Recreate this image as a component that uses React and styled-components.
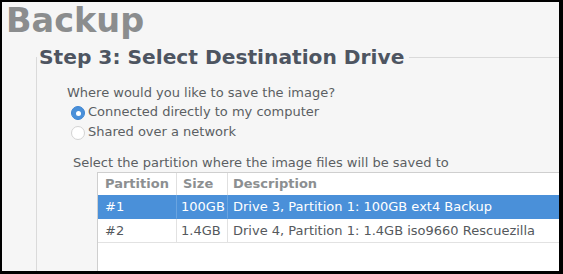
import React from "react";
import styled, { createGlobalStyle } from "styled-components";

const Global = createGlobalStyle`
  html, body { margin: 0; padding: 0; background: #000; }
  body { width: 563px; height: 274px; overflow: hidden; font-family: "DejaVu Sans", "Liberation Sans", sans-serif; }
  #root { width: 563px; height: 274px; }
`;

const Frame = styled.div`
  width: 563px;
  height: 274px;
  padding: 2px 4px 3px 2px;
  box-sizing: border-box;
  background: #000;
`;

const Window = styled.div`
  width: 100%;
  height: 100%;
  background: #f6f6f6;
  overflow: hidden;
  display: flex;
  flex-direction: column;
`;

const PageTitle = styled.h1`
  margin: 0;
  padding-left: 4px;
  font-size: 33.5px;
  line-height: 38px;
  font-weight: bold;
  color: #8b8d8e;
`;

const Section = styled.fieldset`
  margin: 5px 0 0 34px;
  padding: 0;
  border: none;
  border-top: 1px solid #dadada;
  border-left: 1px solid #dadada;
  min-width: 0;
  flex: 1;
`;

const Legend = styled.legend`
  padding: 0 5px 0 2px;
  margin: 0;
  font-size: 20.2px;
  line-height: 24px;
  font-weight: bold;
  color: #4e5561;
`;

const Body = styled.div`
  padding: 15px 0 0 30px;
  display: flex;
  flex-direction: column;
`;

const Label = styled.div`
  font-size: 13px;
  line-height: 18px;
  color: #5b5f63;
  margin-left: ${(p) => p.$indent || 0}px;
  white-space: nowrap;
`;

const RadioGroup = styled.div`
  display: flex;
  flex-direction: column;
  margin-left: 4px;
  margin-bottom: 12px;
`;

const RadioRow = styled.label`
  display: flex;
  align-items: flex-start;
  gap: 3px;
  height: 20px;
  font-size: 13px;
  line-height: 20px;
  color: #5b5f63;
  white-space: nowrap;
`;

const RadioDot = styled.span`
  width: 14px;
  height: 14px;
  margin-top: 4px;
  border-radius: 50%;
  box-sizing: border-box;
  flex: none;
  display: flex;
  align-items: center;
  justify-content: center;
  background: ${(p) => (p.$checked ? "#4a90d9" : "#ffffff")};
  border: 1px solid ${(p) => (p.$checked ? "#3d85d3" : "#d3d3d3")};
  &::after {
    content: "";
    width: 5px;
    height: 5px;
    border-radius: 50%;
    background: #fff;
    display: ${(p) => (p.$checked ? "block" : "none")};
  }
`;

const Table = styled.div`
  margin-left: 30px;
  height: 140px;
  background: #fff;
  border-left: 1px solid #cfcfcf;
  border-top: 1px solid #cfcfcf;
  display: grid;
  grid-template-columns: 79px 51px 1fr;
  grid-auto-rows: min-content;
  font-size: 13px;
  white-space: nowrap;
`;

const HeadCell = styled.div`
  height: 22px;
  line-height: 22px;
  font-weight: bold;
  color: #8c8f91;
  padding-left: ${(p) => p.$pad}px;
  border-right: ${(p) => (p.$last ? "none" : "1px solid #e0e0e0")};
`;

const Cell = styled.div`
  height: 23px;
  line-height: 23px;
  padding-left: ${(p) => p.$pad}px;
  color: ${(p) => (p.$selected ? "#ffffff" : "#55595d")};
  background: ${(p) => (p.$selected ? "#4a90d9" : "#ffffff")};
  border-bottom: 1px solid ${(p) => (p.$selected ? "#4a90d9" : "#e2e2e2")};
  border-right: ${(p) =>
    p.$last ? "none" : `1px solid ${p.$selected ? "#6aa4e0" : "#e2e2e2"}`};
`;

const columns = [
  { title: "Partition", headPad: 7, pad: 7 },
  { title: "Size", headPad: 6, pad: 4 },
  { title: "Description", headPad: 5, pad: 5 },
];

const rows = [
  ["#1", "100GB", "Drive 3, Partition 1: 100GB ext4 Backup"],
  ["#2", "1.4GB", "Drive 4, Partition 1: 1.4GB iso9660 Rescuezilla"],
];

export default function App() {
  return (
    <>
      <Global />
      <Frame>
        <Window>
          <PageTitle>Backup</PageTitle>
          <Section>
            <Legend>Step 3: Select Destination Drive</Legend>
            <Body>
              <Label>Where would you like to save the image?</Label>
              <RadioGroup>
                <RadioRow>
                  <RadioDot $checked />
                  Connected directly to my computer
                </RadioRow>
                <RadioRow>
                  <RadioDot />
                  Shared over a network
                </RadioRow>
              </RadioGroup>
              <Label $indent={6}>Select the partition where the image files will be saved to</Label>
              <Table>
                {columns.map((c, i) => (
                  <HeadCell key={c.title} $pad={c.headPad} $last={i === columns.length - 1}>
                    {c.title}
                  </HeadCell>
                ))}
                {rows.map((r, ri) =>
                  r.map((v, ci) => (
                    <Cell
                      key={`${ri}-${ci}`}
                      $pad={columns[ci].pad}
                      $selected={ri === 0}
                      $last={ci === r.length - 1}
                    >
                      {v}
                    </Cell>
                  ))
                )}
              </Table>
            </Body>
          </Section>
        </Window>
      </Frame>
    </>
  );
}
